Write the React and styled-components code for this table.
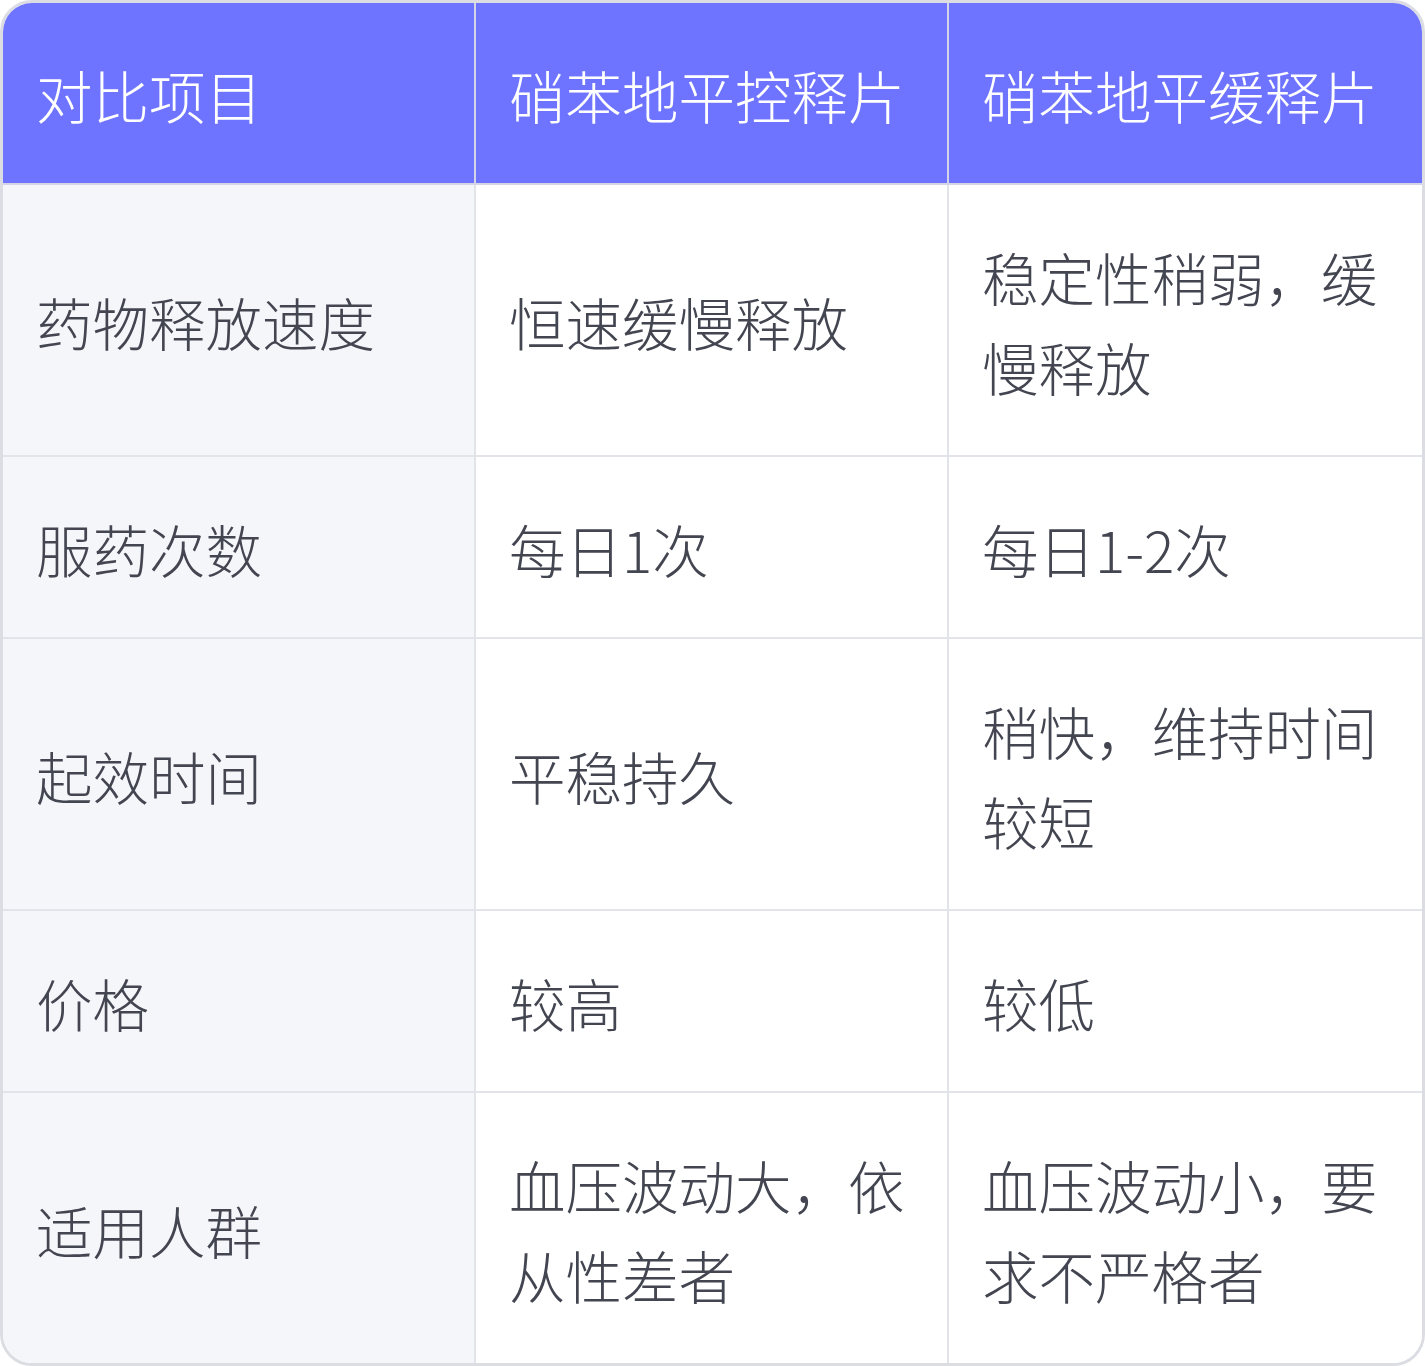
import styled, { createGlobalStyle } from 'styled-components';

const GlobalStyle = createGlobalStyle`
  html, body {
    margin: 0;
    padding: 0;
    background: #ffffff;
  }
  * {
    box-sizing: border-box;
  }
`;

const Table = styled.div`
  width: 1425px;
  border: 3px solid #dcdde3;
  border-radius: 32px;
  overflow: hidden;
  display: grid;
  grid-template-columns: 473px 473px 1fr;
  font-family: 'Noto Sans CJK SC', 'Noto Sans', sans-serif;
  font-weight: 300;
  font-size: 56.5px;
  line-height: 90px;
`;

const Cell = styled.div`
  padding: 46px 30px 44px 33px;
  display: flex;
  align-items: center;
  color: ${(props) => (props.head ? '#ffffff' : '#434651')};
  background: ${(props) =>
    props.head ? '#6e74ff' : props.first ? '#f5f6fa' : '#ffffff'};
  border-right: ${(props) => (props.last ? 'none' : '2px solid')};
  border-bottom: ${(props) => (props.bottom ? 'none' : '2px solid')};
  border-color: ${(props) => (props.head ? '#d3d4e6' : '#e3e4ea')};
`;

const header = ['对比项目', '硝苯地平控释片', '硝苯地平缓释片'];

const rows = [
  ['药物释放速度', '恒速缓慢释放', '稳定性稍弱，缓慢释放'],
  ['服药次数', '每日1次', '每日1-2次'],
  ['起效时间', '平稳持久', '稍快，维持时间较短'],
  ['价格', '较高', '较低'],
  ['适用人群', '血压波动大，依从性差者', '血压波动小，要求不严格者'],
];

export default function App() {
  return (
    <>
      <GlobalStyle />
      <Table>
        {header.map((h, i) => (
          <Cell key={h} head last={i === 2}>
            {h}
          </Cell>
        ))}
        {rows.map((row, r) =>
          row.map((text, i) => (
            <Cell
              key={r + '-' + i}
              first={i === 0}
              last={i === 2}
              bottom={r === rows.length - 1}
            >
              {text}
            </Cell>
          ))
        )}
      </Table>
    </>
  );
}
